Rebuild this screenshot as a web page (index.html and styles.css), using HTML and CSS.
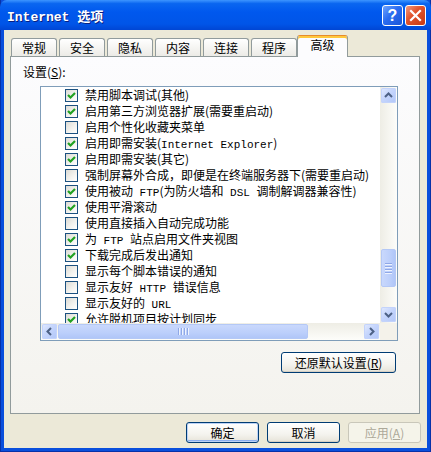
FILE: index.html
```html
<!DOCTYPE html>
<html>
    <head>
        <meta charset="UTF-8">
        <meta name="viewport" content="width=device-width, initial-scale=1.0">
        <title>Internet 选项</title>
        <link rel="stylesheet" href="styles.css">
    </head>
    <body>
        <div class="window">
            <div class="titlebar">
                <span class="title">Internet 选项</span>
                <div class="caption-btns">
                    <span class="cap-btn help">?</span>
                    <span class="cap-btn close">
                        <svg width="13" height="13" viewBox="0 0 13 13"><path d="M2 2 L11 11 M11 2 L2 11" stroke="#fff" stroke-width="2.2" stroke-linecap="square"/></svg>
                    </span>
                </div>
            </div>

            <div class="client">
                <div class="tabs">
                    <div class="tab">常规</div>
                    <div class="tab">安全</div>
                    <div class="tab">隐私</div>
                    <div class="tab">内容</div>
                    <div class="tab">连接</div>
                    <div class="tab before-active">程序</div>
                    <div class="tab active">高级</div>
                </div>

                <div class="panel">
                    <div class="label">设置(<u>S</u>):</div>

                    <div class="listbox">
                        <div class="list-main">
                            <div class="items" id="items"></div>
                            <div class="vscroll">
                                <div class="sb-btn">
                                    <svg width="15" height="15" viewBox="0 0 15 15"><polyline points="4,9 7.5,5.5 11,9" fill="none" stroke="#4d6185" stroke-width="2"/></svg>
                                </div>
                                <div class="vtrack">
                                    <div class="vthumb">
                                        <span class="grip"></span><span class="grip"></span><span class="grip"></span><span class="grip"></span>
                                    </div>
                                </div>
                                <div class="sb-btn">
                                    <svg width="15" height="15" viewBox="0 0 15 15"><polyline points="4,6 7.5,9.5 11,6" fill="none" stroke="#4d6185" stroke-width="2"/></svg>
                                </div>
                            </div>
                        </div>
                        <div class="hscroll-row">
                            <div class="hscroll">
                                <div class="sb-btn">
                                    <svg width="15" height="15" viewBox="0 0 15 15"><polyline points="9,4 5.5,7.5 9,11" fill="none" stroke="#4d6185" stroke-width="2"/></svg>
                                </div>
                                <div class="htrack">
                                    <div class="hthumb">
                                        <span class="hgrip"></span><span class="hgrip"></span><span class="hgrip"></span><span class="hgrip"></span>
                                    </div>
                                </div>
                                <div class="sb-btn">
                                    <svg width="15" height="15" viewBox="0 0 15 15"><polyline points="6,4 9.5,7.5 6,11" fill="none" stroke="#4d6185" stroke-width="2"/></svg>
                                </div>
                            </div>
                            <div class="corner"></div>
                        </div>
                    </div>

                    <div class="restore-row">
                        <button class="btn restore">还原默认设置(<u>R</u>)</button>
                    </div>
                </div>

                <div class="dialog-btns">
                    <button class="btn default">确定</button>
                    <button class="btn">取消</button>
                    <button class="btn disabled">应用(<u>A</u>)</button>
                </div>
            </div>
        </div>

        <script>
            const options = [
                { text: "禁用脚本调试(其他)", checked: true },
                { text: "启用第三方浏览器扩展(需要重启动)", checked: true },
                { text: "启用个性化收藏夹菜单", checked: false },
                { text: "启用即需安装(<span class='en'>Internet Explorer</span>)", checked: true },
                { text: "启用即需安装(其它)", checked: true },
                { text: "强制屏幕外合成，即便是在终端服务器下(需要重启动)", checked: false },
                { text: "使用被动<span class='en'> FTP</span>(为防火墙和<span class='en'> DSL </span>调制解调器兼容性)", checked: true },
                { text: "使用平滑滚动", checked: true },
                { text: "使用直接插入自动完成功能", checked: false },
                { text: "为<span class='en'> FTP </span>站点启用文件夹视图", checked: true },
                { text: "下载完成后发出通知", checked: true },
                { text: "显示每个脚本错误的通知", checked: false },
                { text: "显示友好<span class='en'> HTTP </span>错误信息", checked: false },
                { text: "显示友好的<span class='en'> URL</span>", checked: false },
                { text: "允许脱机项目按计划同步", checked: true }
            ];

            const itemsEl = document.getElementById('items');
            const tick = '<svg width="11" height="11" viewBox="0 0 11 11"><polyline points="2,5 4.5,7.5 9,3" fill="none" stroke="#21a121" stroke-width="2.2"/></svg>';

            options.forEach(option => {
                const row = document.createElement('div');
                row.classList.add('item');
                row.innerHTML = '<span class="checkbox">' + (option.checked ? tick : '') + '</span>' +
                    '<span class="item-text">' + option.text + '</span>';
                itemsEl.appendChild(row);
            });
        </script>
    </body>
</html>
```

FILE: styles.css
```css
body {
    margin: 0;
    padding: 0;
    font-family: "Noto Sans CJK SC", "Liberation Sans", sans-serif;
    font-size: 12px;
    color: #000000;
}

.window {
    width: 431px;
    height: 452px;
    display: flex;
    flex-direction: column;
    background: #0a4fdc;
    box-sizing: border-box;
    border: 1px solid #0831a8;
    border-top: none;
}

/* title bar */

.titlebar {
    height: 30px;
    margin: 0 -1px;
    display: flex;
    align-items: center;
    justify-content: space-between;
    padding: 0 5px 0 7px;
    background: linear-gradient(to bottom, #3d95ff 0%, #0a66f0 12%, #0058ee 40%, #0055e8 80%, #0046d4 100%);
    border-radius: 7px 7px 0 0;
}

.title {
    color: #ffffff;
    font-family: "Liberation Mono", "Noto Sans CJK SC", monospace;
    font-weight: bold;
    font-size: 13px;
    text-shadow: 1px 1px 0 #0a1f80;
    margin-top: 1px;
}

.caption-btns {
    display: flex;
    gap: 2px;
    margin-top: 1px;
}

.cap-btn {
    width: 21px;
    height: 21px;
    box-sizing: border-box;
    border: 1px solid #ffffff;
    border-radius: 3px;
    display: flex;
    align-items: center;
    justify-content: center;
    color: #ffffff;
    font-family: "Liberation Sans", sans-serif;
    font-weight: bold;
    font-size: 16px;
}

.help {
    background: linear-gradient(135deg, #6fa4ff 0%, #2a6cf0 45%, #1b55d8 100%);
}

.close {
    background: linear-gradient(135deg, #f39a7f 0%, #e2552f 40%, #c73812 100%);
}

/* client area */

.client {
    flex: 1;
    margin: 0 3px 3px 3px;
    background: #ece9d8;
    display: flex;
    flex-direction: column;
}

.tabs {
    display: flex;
    align-items: flex-end;
    height: 21px;
    margin: 5px 0 0 7px;
    position: relative;
    z-index: 1;
}

.tab {
    width: 46px;
    height: 18px;
    box-sizing: border-box;
    margin-right: 2px;
    border: 1px solid #919b9c;
    border-bottom: none;
    border-radius: 3px 3px 0 0;
    background: linear-gradient(to bottom, #ffffff, #ecebe6);
    text-align: center;
    line-height: 17px;
}

.tab.before-active {
    margin-right: 0;
}

.tab.active {
    width: 51px;
    height: 22px;
    margin-bottom: -1px;
    background: #fcfcfe;
    border-top: 1px solid #e68b2c;
    box-shadow: inset 0 2px 0 #ffc83c;
    line-height: 16px;
    padding-top: 1px;
}

.panel {
    height: 358px;
    margin: 0 7px 0 6px;
    box-sizing: border-box;
    border: 1px solid #919b9c;
    background: linear-gradient(to bottom, #fcfcfe, #f4f3ee);
    padding: 7px 0 0 12px;
}

.label {
    line-height: 16px;
}

.listbox {
    width: 358px;
    margin: 6px 0 0 17px;
    box-sizing: border-box;
    border: 1px solid #7f9db9;
    background: #ffffff;
}

.list-main {
    display: flex;
    height: 236px;
}

.items {
    flex: 1;
    overflow: hidden;
    padding-left: 24px;
}

.item {
    height: 16px;
    display: flex;
    align-items: flex-start;
    white-space: nowrap;
}

.checkbox {
    width: 13px;
    height: 13px;
    box-sizing: border-box;
    margin-top: 2px;
    margin-right: 7px;
    border: 1px solid #1c5180;
    background: linear-gradient(135deg, #dcdbd5 0%, #f4f3ef 60%, #ffffff 100%);
    display: flex;
    align-items: center;
    justify-content: center;
    flex-shrink: 0;
}

.item-text {
    line-height: 16px;
}

.en {
    font-family: "Liberation Mono", monospace;
    font-size: 11px;
}

/* scroll bars */

.vscroll {
    width: 17px;
    display: flex;
    flex-direction: column;
    background: linear-gradient(to right, #eeede5, #fdfdfa);
}

.vtrack {
    flex: 1;
}

.vthumb {
    height: 38px;
    margin: 145px 1px 0 1px;
    box-sizing: border-box;
    border: 1px solid #b4c8f6;
    border-radius: 2px;
    background: linear-gradient(to right, #c9d8fc, #bccffb 60%, #b0c6f8);
    display: flex;
    flex-direction: column;
    align-items: center;
    justify-content: center;
    gap: 1px;
}

.grip {
    width: 7px;
    height: 1px;
    background: #8fa8e7;
    border-bottom: 1px solid #eef3fe;
}

.sb-btn {
    width: 15px;
    height: 15px;
    margin: 1px;
    border: none;
    border-radius: 2px;
    background: linear-gradient(135deg, #e3ebfe 0%, #c5d5fc 45%, #b1c6f8 100%);
    box-shadow: inset 0 0 0 1px #c3d3fb;
    display: flex;
    align-items: center;
    justify-content: center;
}

.hscroll-row {
    display: flex;
    height: 17px;
}

.hscroll {
    flex: 1;
    display: flex;
    background: linear-gradient(to bottom, #eeede5, #fdfdfa);
}

.htrack {
    flex: 1;
    display: flex;
}

.hthumb {
    width: 250px;
    margin: 1px 0;
    box-sizing: border-box;
    border: 1px solid #b4c8f6;
    border-radius: 2px;
    background: linear-gradient(to bottom, #c9d8fc, #bccffb 60%, #b0c6f8);
    display: flex;
    align-items: center;
    justify-content: center;
    gap: 1px;
}

.hgrip {
    width: 1px;
    height: 7px;
    background: #8fa8e7;
    border-right: 1px solid #eef3fe;
}

.corner {
    width: 17px;
    background: #f4f2ea;
}

/* buttons */

.restore-row {
    display: flex;
    justify-content: flex-end;
    width: 356px;
    margin: 11px 0 0 17px;
}

.btn {
    height: 21px;
    padding: 0;
    box-sizing: border-box;
    border: 1px solid #003c74;
    border-radius: 3px;
    background: linear-gradient(to bottom, #ffffff 0%, #f4f3ee 60%, #e6e3d8 100%);
    box-shadow: inset 0 -1px 0 #d6d0c5;
    font-family: "Noto Sans CJK SC", "Liberation Sans", sans-serif;
    font-size: 12px;
    color: #000000;
    line-height: 18px;
}

.restore {
    width: 115px;
}

.dialog-btns {
    display: flex;
    justify-content: flex-end;
    gap: 8px;
    margin: 8px 6px 0 0;
}

.dialog-btns .btn {
    width: 73px;
}

.btn.default {
    box-shadow: inset 0 0 0 1px #bcd2f6, inset 0 -2px 0 #89adf0;
}

.btn.disabled {
    border-color: #c9c7ba;
    background: #f5f4ea;
    box-shadow: none;
    color: #aca899;
}
```
